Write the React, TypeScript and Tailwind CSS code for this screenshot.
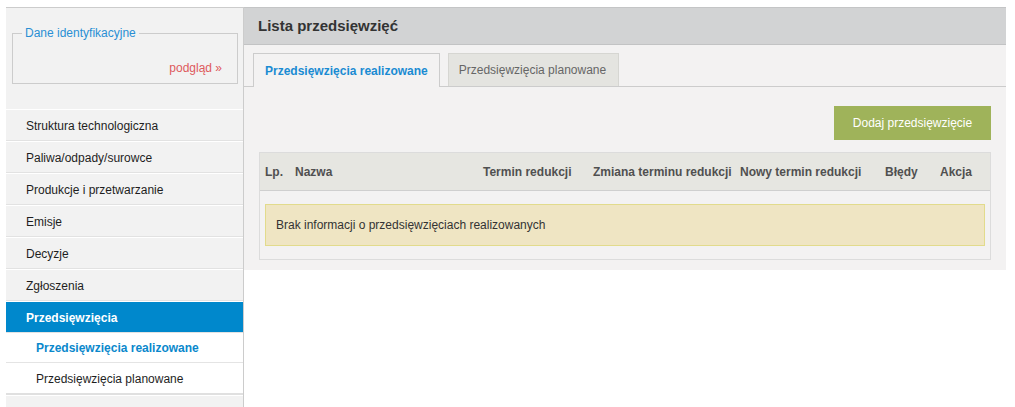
import React from 'react';

const MENU = [
  'Struktura technologiczna',
  'Paliwa/odpady/surowce',
  'Produkcje i przetwarzanie',
  'Emisje',
  'Decyzje',
  'Zgłoszenia',
];

const SUBMENU = [
  { label: 'Przedsięwzięcia realizowane', active: true },
  { label: 'Przedsięwzięcia planowane', active: false },
];

const COLUMNS = [
  { label: 'Lp.', w: 'w-[30px]' },
  { label: 'Nazwa', w: 'w-[188px]' },
  { label: 'Termin redukcji', w: 'w-[110px]' },
  { label: 'Zmiana terminu redukcji', w: 'w-[147px]' },
  { label: 'Nowy termin redukcji', w: 'w-[145px]' },
  { label: 'Błędy', w: 'w-[55px]' },
  { label: 'Akcja', w: 'flex-1' },
];

function Sidebar() {
  return (
    <aside className="w-[238px] h-[400px] shrink-0 bg-[#f2f2f2] border-t border-r border-[#cccccc]">
      {/* Identification data box */}
      <fieldset className="ml-[6px] mt-[17px] w-[226px] h-[59px] border border-[#cccccc] pl-[9px] pr-[15px]">
        <legend className="px-[3px] text-[12px] leading-[16px] text-[#2a8fd4]">Dane identyfikacyjne</legend>
        <div className="mt-[19px] text-right text-[12px] leading-[16px] text-[#de5a5d]">podgląd »</div>
      </fieldset>

      {/* Menu */}
      <nav className="mt-[25px] text-[12px] text-[#1e1e1e]">
        {MENU.map((item) => (
          <div key={item} className="h-[32px] flex items-center pl-[20px] pt-[2px] border-t border-white border-b border-b-[#e2e2e2]">
            {item}
          </div>
        ))}
        <div className="h-[32px] flex items-center pl-[20px] pt-[2px] border-t border-white border-b border-b-[#e2e2e2] bg-[#0088cc] font-bold text-white">
          Przedsięwzięcia
        </div>
        <div className="bg-white border-b-2 border-[#e0e0e0]">
          {SUBMENU.map((sub, i) => (
            <div
              key={sub.label}
              className={
                'h-[30px] flex items-center pl-[30px] pt-[1px] ' +
                (i === 0 ? 'border-b border-[#e4e4e4] ' : '') +
                (sub.active ? 'font-bold text-[#0a88cc]' : 'text-[#1e1e1e]')
              }
            >
              {sub.label}
            </div>
          ))}
        </div>
        <div className="h-[32px] flex items-center pl-[20px] pt-[2px] border-t border-white">Błędy</div>
      </nav>
    </aside>
  );
}

function Tabs() {
  return (
    <div className="flex items-end border-b border-[#cccccc] pl-[9px]">
      <div className="h-[34px] -mb-px flex items-center px-[11px] border border-b-0 border-[#cccccc] bg-[#f3f2f2] text-[12px] font-bold text-[#1a8bd2]">
        Przedsięwzięcia realizowane
      </div>
      <div className="h-[33px] ml-[8px] flex items-center pl-[10px] pr-[12px] border border-b-0 border-[#d6d6d2] bg-[#e4e4e0] text-[12px] text-[#666666]">
        Przedsięwzięcia planowane
      </div>
    </div>
  );
}

function ProjectsTable() {
  return (
    <div className="mt-[12px] border border-[#dcdcdc]">
      <div className="h-[38px] flex items-center pl-[5px] bg-[#e6e6e1] border-b border-[#cfcfcf] text-[12px] font-bold text-[#505050]">
        {COLUMNS.map((c) => (
          <div key={c.label} className={c.w}>
            {c.label}
          </div>
        ))}
      </div>
      <div className="px-[5px] pt-[13px] pb-[13px]">
        <div className="h-[42px] flex items-center pl-[10px] border border-[#e2db8c] bg-[#efe5c3] text-[12px] text-[#333333]">
          Brak informacji o przedsięwzięciach realizowanych
        </div>
      </div>
    </div>
  );
}

export default function App() {
  return (
    <div
      className="w-[1015px] h-[407px] overflow-hidden bg-white flex items-start pt-[7px] pl-[6px]"
      style={{ fontFamily: '"Liberation Sans", Arial, sans-serif' }}
    >
      <Sidebar />

      <main className="w-[762px] shrink-0 bg-[#f3f2f2]">
        <header className="h-[38px] flex items-center pl-[14px] bg-[#d2d3d4] border-t border-[#c4c5c6] border-b border-b-[#c2c3c4] text-[15px] font-bold text-[#333333]">
          Lista przedsięwzięć
        </header>

        <div className="pt-[8px] pb-[10px]">
          <Tabs />
          <div className="px-[15px]">
            <div className="mt-[19px] flex justify-end">
              <button className="h-[34px] w-[157px] bg-[#9fb35a] text-[12px] text-white">Dodaj przedsięwzięcie</button>
            </div>
            <ProjectsTable />
          </div>
        </div>
      </main>
    </div>
  );
}
